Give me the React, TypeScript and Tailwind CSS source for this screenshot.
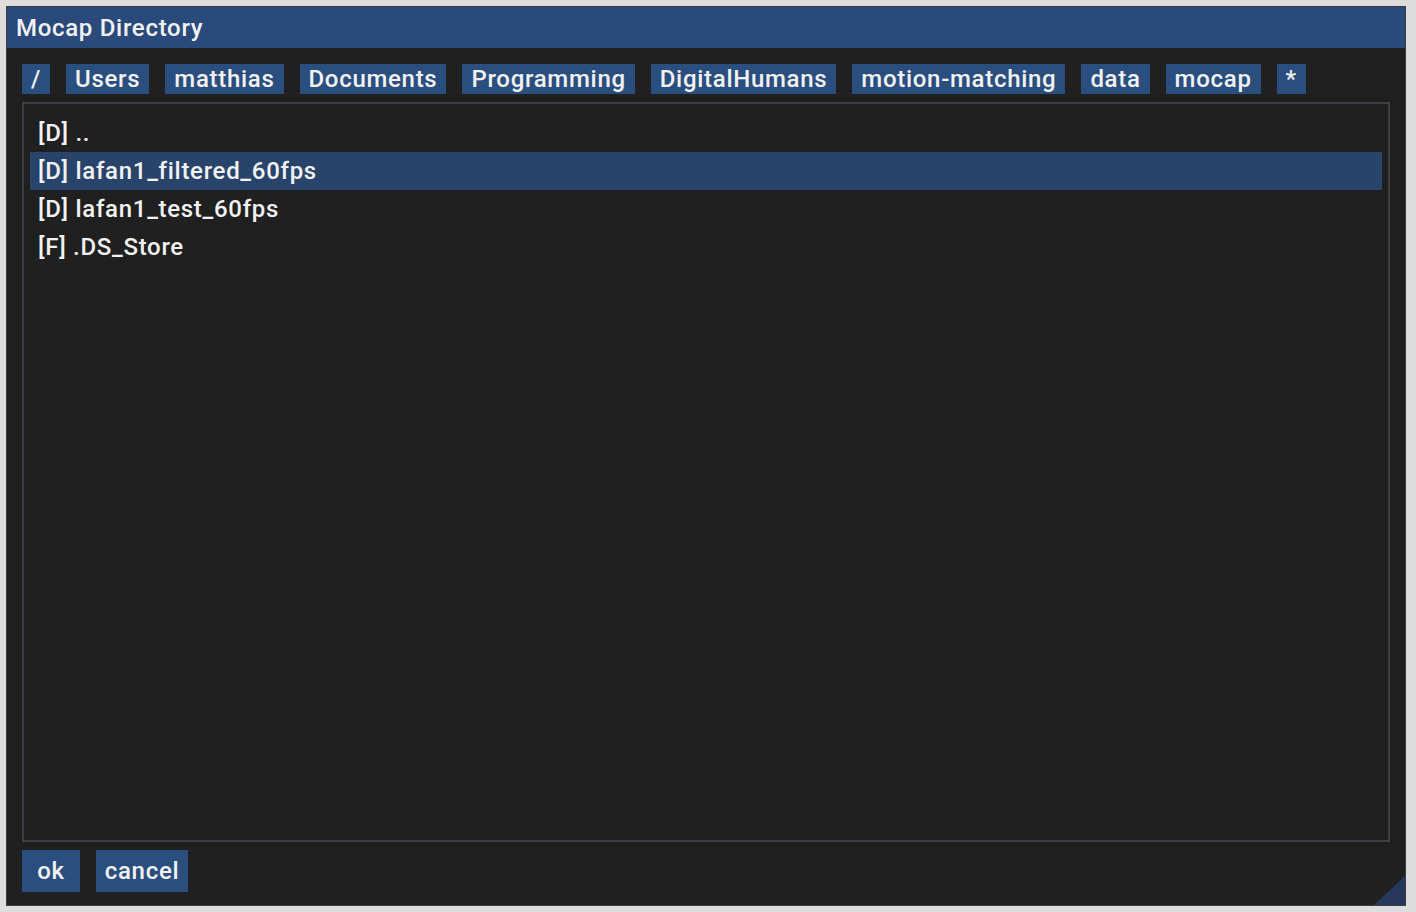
import React from "react";

const crumbs = [
  "/",
  "Users",
  "matthias",
  "Documents",
  "Programming",
  "DigitalHumans",
  "motion-matching",
  "data",
  "mocap",
  "*",
];

const entries = [
  { label: "[D] ..", selected: false },
  { label: "[D] lafan1_filtered_60fps", selected: true },
  { label: "[D] lafan1_test_60fps", selected: false },
  { label: "[F] .DS_Store", selected: false },
];

export default function App() {
  return (
    <div
      className="w-full h-[912px] bg-[#dddddd] p-[6px] text-[#f2f2f2] font-medium tracking-[0.7px]"
      style={{ fontFamily: "Roboto, 'Noto Sans', sans-serif" }}
    >
      <div className="relative w-[1400px] h-[900px] border border-[#3c3c42] bg-[#202020] flex flex-col">
        {/* Title bar */}
        <div className="h-[41px] bg-[#2a4a7b] flex items-center px-[9px] text-[24px] leading-none">
          Mocap Directory
        </div>

        <div className="flex-1 flex flex-col px-[15px] pt-[16px] pb-[13px] gap-[8px] min-h-0">
          {/* Breadcrumb */}
          <div className="flex gap-4 h-[30px]">
            {crumbs.map((c) => (
              <div
                key={c}
                className="h-[30px] bg-[#2a4e7e] px-[9px] flex items-center text-[24px] leading-none"
              >
                {c}
              </div>
            ))}
          </div>

          {/* File list */}
          <div className="flex-1 border-2 border-[#3e3e45] px-[6px] pt-[10px]">
            {entries.map((e) => (
              <div
                key={e.label}
                className={`h-[38px] flex items-center px-[8px] text-[24px] leading-none ${
                  e.selected ? "bg-[#29446a]" : ""
                }`}
              >
                {e.label}
              </div>
            ))}
          </div>

          {/* Actions */}
          <div className="flex gap-4 h-[42px]">
            <div className="w-[58px] h-[42px] bg-[#2a4e7e] flex items-center justify-center text-[24px] leading-none">
              ok
            </div>
            <div className="w-[92px] h-[42px] bg-[#2a4e7e] flex items-center justify-center text-[24px] leading-none">
              cancel
            </div>
          </div>
        </div>

        {/* Resize grip */}
        <svg
          className="absolute right-0 bottom-0"
          width="31"
          height="29"
          viewBox="0 0 31 29"
        >
          <polygon points="31,0 31,29 0,29" fill="#26395a" />
        </svg>
      </div>
    </div>
  );
}
